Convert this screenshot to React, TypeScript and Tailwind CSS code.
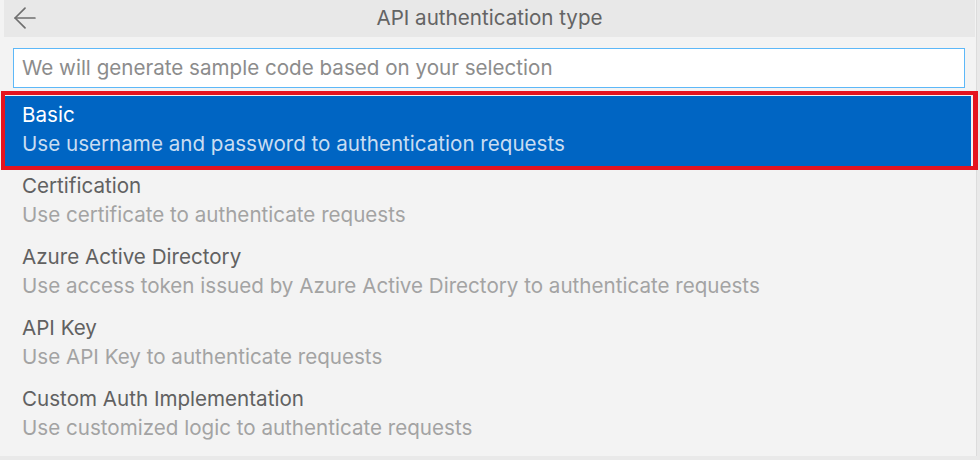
import { ArrowLeft } from 'lucide-react'

const options = [
  { name: 'Basic', desc: 'Use username and password to authentication requests' },
  { name: 'Certification', desc: 'Use certificate to authenticate requests' },
  { name: 'Azure Active Directory', desc: 'Use access token issued by Azure Active Directory to authenticate requests' },
  { name: 'API Key', desc: 'Use API Key to authenticate requests' },
  { name: 'Custom Auth Implementation', desc: 'Use customized logic to authenticate requests' },
]

export default function App() {
  const selected = 0

  return (
    <div
      className="w-[980px] h-[460px] bg-[#e9e9e9] overflow-hidden"
      style={{ fontFamily: 'Inter, "Noto Sans", sans-serif' }}
    >
      <div className="relative w-[977px] h-[456px] bg-[#f3f3f3] border-r border-[#dcdcdc]">
        {/* Title bar */}
        <div className="ml-[4px] mr-[1px] h-[37px] bg-[#e8e8e8] flex items-center relative">
          <ArrowLeft className="absolute left-[4px] top-[1px] w-[34px] h-[34px] text-[#6f6f6f]" strokeWidth={1.2} />
          <div className="flex-1 text-center text-[20.6px] text-[#646464]">API authentication type</div>
        </div>

        {/* Search box */}
        <div className="mt-[11px] ml-[13px] w-[952px] h-[40px] bg-white border border-[#5db8f8] flex items-center px-[8px]">
          <span className="text-[20.6px] text-[#8c8c8c]">We will generate sample code based on your selection</span>
        </div>

        {/* Options */}
        <ul className="mt-[8px]">
          {options.map((opt, i) => {
            const isActive = i === selected
            return (
              <li
                key={opt.name}
                className={`h-[71px] pt-[4px] ${isActive ? 'bg-[#0065c3] mx-[5px] pl-[17px]' : 'pl-[22px]'}`}
              >
                <div className={`text-[20.6px] leading-[29px] ${isActive ? 'text-white' : 'text-[#616161]'}`}>{opt.name}</div>
                <div className={`text-[20.6px] leading-[29px] ${isActive ? 'text-[#c9ddf2]' : 'text-[#a3a3a3]'}`}>{opt.desc}</div>
              </li>
            )
          })}
        </ul>

        {/* Highlight annotation */}
        <div className="absolute left-[1px] top-[91px] w-[977px] h-[79px] border-[4px] border-r-[5px] border-[#e5141f] pointer-events-none" />
      </div>
    </div>
  )
}
